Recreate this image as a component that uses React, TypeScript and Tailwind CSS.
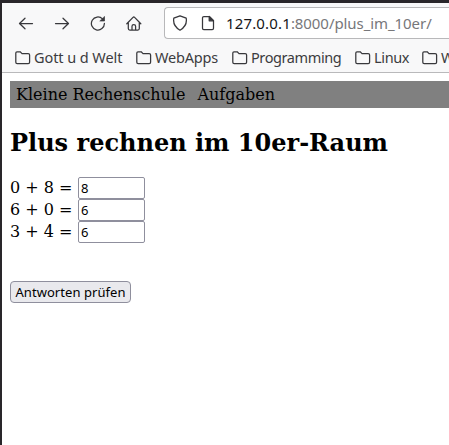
import React from "react";

const bookmarks = [
  { label: "Gott u d Welt", box: "w-[121px]", text: "tracking-[-0.08px]" },
  { label: "WebApps", box: "w-[96px]", text: "tracking-[-0.18px]" },
  { label: "Programming", box: "w-[123px]", text: "tracking-[-0.4px]" },
  { label: "Linux", box: "w-[67px]", text: "tracking-[-0.35px]" },
  { label: "W", box: "w-[40px]", text: "tracking-normal" },
];

const tasks = [
  { question: "0 + 8 =", answer: "8" },
  { question: "6 + 0 =", answer: "6" },
  { question: "3 + 4 =", answer: "6" },
];

function Icon({ children, className = "" }: { children: React.ReactNode; className?: string }) {
  return (
    <svg
      viewBox="0 0 16 16"
      className={`h-4 w-4 shrink-0 ${className}`}
      fill="none"
      stroke="#38383c"
      strokeWidth="1.25"
      strokeLinecap="round"
      strokeLinejoin="round"
    >
      {children}
    </svg>
  );
}

function Toolbar() {
  return (
    <div className="flex h-[41px] items-start pt-1">
      <div className="flex w-[162px] shrink-0 gap-5 pt-[9px] pl-4">
        <Icon>
          <path d="M14.5 7.5H1.7M7 2.2L1.5 7.5L7 12.8" />
        </Icon>
        <Icon>
          <path d="M1.5 7.5H14.3M9 2.2L14.5 7.5L9 12.8" />
        </Icon>
        <Icon>
          <path d="M12.5 2.9A6.5 6.5 0 1 0 14.4 7.4" />
          <path d="M14.5 .8V5H10.2Z" fill="#38383c" strokeWidth=".7" />
        </Icon>
        <Icon>
          <path d="M.8 7.8L7 1.4Q7.8 .6 8.6 1.4L14.8 7.8M2.3 6.7V12.5Q2.3 14 3.8 14H11.8Q13.3 14 13.3 12.5V6.7M6 14V10.2Q6 8.7 7.8 8.7T9.6 10.2V14" />
        </Icon>
      </div>
      <div className="flex h-8 flex-1 items-center rounded-l border border-r-0 border-[#b8b8ba] bg-white pl-[7px]">
        <Icon>
          <path d="M8 .8L14.2 3.2Q15.5 10.8 8 15.2Q.5 10.8 1.8 3.2Z" />
        </Icon>
        <Icon className="ml-3">
          <path d="M3.9 1.5H9.2L13.5 5.8V13.2Q13.5 14.5 12.2 14.5H3.8Q2.5 14.5 2.5 13.2V2.8Q2.5 1.5 3.9 1.5Z" />
          <path d="M9.2 1.5V5.8H13.5Z" fill="#38383c" />
        </Icon>
        <span className="ml-[10px] whitespace-nowrap font-['Noto_Sans','Open_Sans',sans-serif] text-[15px] leading-5 tracking-[-0.07px] text-[#77777a]">
          <span className="tracking-[0.15px] text-[#151519]">127.0.0.1</span>:8000/plus_im_10er/
        </span>
      </div>
    </div>
  );
}

function Bookmarks() {
  return (
    <div className="flex h-7 items-center pl-[13px]">
      {bookmarks.map(({ label, box, text }) => (
        <div key={label} className={`flex shrink-0 items-center gap-[3px] ${box}`}>
          <Icon>
            <path d="M.8 3Q.8 1.8 2 1.8H5.2L7 3.6H13.2Q14.6 3.6 14.6 5V12.2Q14.6 13.6 13.2 13.6H2.2Q.8 13.6 .8 12.2Z" />
          </Icon>
          <span className={`pb-0.5 whitespace-nowrap font-['Noto_Sans','Open_Sans',sans-serif] text-[14.5px] leading-5 text-[#3c3c40] ${text}`}>
            {label}
          </span>
        </div>
      ))}
    </div>
  );
}

export default function App() {
  return (
    <div className="h-[445px] w-[449px] overflow-hidden border-t-[3px] border-l-2 border-[#29262a] bg-white font-['DejaVu_Serif',serif] text-base text-black">
      <header className="h-[70px] overflow-hidden border-b border-[#b9b9bb] bg-[#f8f8f9]">
        <Toolbar />
        <Bookmarks />
      </header>
      <main className="pt-2 pl-2">
        <nav className="flex h-[27px] items-center gap-3 bg-[#808080] pl-1.5">
          <span>Kleine Rechenschule</span>
          <span>Aufgaben</span>
        </nav>
        <h1 className="mt-[21px] text-2xl leading-[28px] font-bold">Plus rechnen im 10er-Raum</h1>
        <form className="mt-5">
          {tasks.map(({ question, answer }) => (
            <label key={question} className="flex h-[22px] items-center">
              <span className="w-[68px] shrink-0 pb-px whitespace-nowrap">{question}</span>
              <input
                defaultValue={answer}
                className="h-[22px] w-[67px] rounded-[2px] border border-[#8f8f9d] bg-white pr-[3px] pl-[2px] font-['Noto_Sans','Open_Sans',sans-serif] text-[13px]"
              />
            </label>
          ))}
          <button
            type="button"
            className="mt-[38px] flex h-[22px] w-[121px] items-center justify-center rounded border border-[#8f8f9d] bg-[#e9e9ed] pt-px font-['Noto_Sans','Open_Sans',sans-serif] text-[13px] tracking-[0.06px] whitespace-nowrap"
          >
            Antworten prüfen
          </button>
        </form>
      </main>
    </div>
  );
}
